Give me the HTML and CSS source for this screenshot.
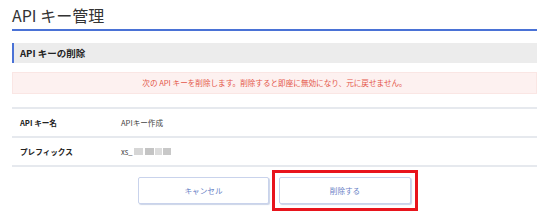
FILE: index.html
```html
<!DOCTYPE html>
<html lang="ja">
<head>
<meta charset="utf-8">
<link rel="stylesheet" href="styles.css">
</head>
<body>
<div class="page">
  <h1 class="title">API キー管理</h1>
  <h2 class="section">API キーの削除</h2>
  <div class="alert">次の API キーを削除します。削除すると即座に無効になり、元に戻せません。</div>
  <div class="table">
    <div class="row">
      <div class="label">API キー名</div>
      <div class="value">APIキー作成</div>
    </div>
    <div class="row">
      <div class="label">プレフィックス</div>
      <div class="value">xs_<span class="blur"><i class="b1"></i><i class="b2"></i><i class="b3"></i><i class="b4"></i></span></div>
    </div>
  </div>
  <div class="actions">
    <button class="btn">キャンセル</button>
    <div class="marked"><button class="btn btn-wide">削除する</button></div>
  </div>
</div>
</body>
</html>
```
FILE: styles.css
```css
* { box-sizing: border-box; }
html, body { height: 100%; }
body {
  margin: 0;
  background: #fff;
  font-family: "Noto Sans CJK JP", "Noto Sans", sans-serif;
  color: #222;
}
.page {
  min-height: 220px;
  padding: 0 13px 0 12px;
}
.title {
  margin: 0;
  padding-top: 3px;
  height: 31px;
  font-size: 16px;
  line-height: 24px;
  font-weight: 400;
  color: #333;
  border-bottom: 2px solid #4a72d6;
}
.section {
  margin: 12px 0 0;
  height: 20px;
  background: #ececec;
  border-left: 2px solid #4a72d6;
  padding-left: 6px;
  font-size: 9.5px;
  font-weight: 700;
  line-height: 20px;
  color: #222;
}
.alert {
  margin-top: 9px;
  height: 22px;
  background: #fdf1f0;
  border: 1px solid #fae6e4;
  color: #e4574a;
  font-size: 7.6px;
  line-height: 20px;
  text-align: center;
}
.table {
  margin-top: 13px;
  border-bottom: 2px solid #e6e9ee;
}
.row {
  display: flex;
  align-items: center;
  height: 29px;
  border-top: 2px solid #e6e9ee;
  font-size: 7.6px;
}
.label {
  width: 109px;
  padding-left: 8px;
  font-weight: 700;
  color: #222;
}
.value {
  color: #444;
  display: flex;
  align-items: center;
}
.blur {
  display: inline-flex;
  margin-left: 1px;
  filter: blur(0.7px);
}
.blur i {
  display: block;
  height: 7px;
}
.b1 { width: 9px; background: #d6d6d6; }
.b2 { width: 9px; background: #c4c4c4; margin-left: 2px; }
.b3 { width: 7px; background: #dcdcdc; margin-left: 1px; }
.b4 { width: 8px; background: #c8c8c8; margin-left: 1px; }
.actions {
  display: flex;
  justify-content: center;
  gap: 10px;
  margin-top: 10px;
  padding-bottom: 14px;
}
.btn {
  display: block;
  width: 131px;
  height: 27px;
  background: #fff;
  border: 1px solid #c9d3ec;
  border-radius: 2px;
  box-shadow: 1px 1px 1px rgba(140, 160, 200, 0.45);
  font-family: inherit;
  font-size: 7.6px;
  color: #6a82c6;
  padding: 0;
}
.btn-wide { width: 132px; }
.marked {
  position: relative;
}
.marked::after {
  content: "";
  position: absolute;
  left: -7px;
  right: -7px;
  top: -7px;
  bottom: -7px;
  border: 3.5px solid #e8141c;
  pointer-events: none;
}
```
